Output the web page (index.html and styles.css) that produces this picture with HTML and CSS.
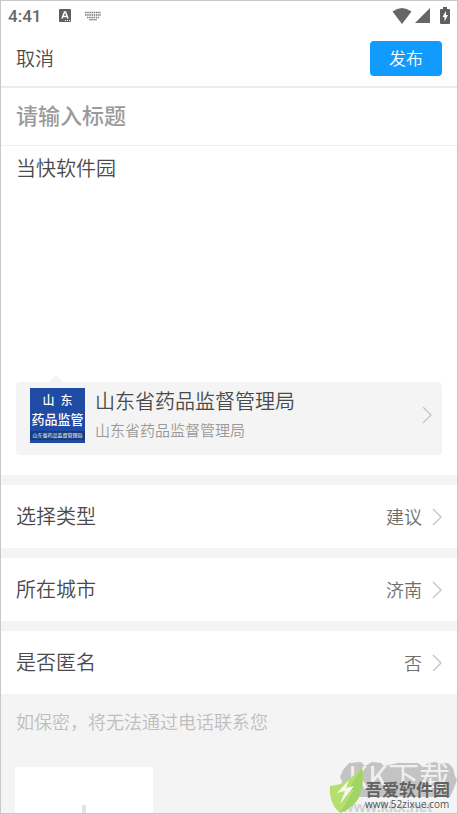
FILE: index.html
```html
<!DOCTYPE html>
<html lang="zh-CN">
<head>
  <meta charset="UTF-8" />
  <meta name="viewport" content="width=device-width, initial-scale=1.0" />
  <title>发布</title>
  <link rel="stylesheet" href="styles.css">
</head>
<body>
  <div class="screen">
    <div class="status-bar">
      <span class="time">4:41</span>
      <svg class="icon-a" width="12" height="13" viewBox="0 0 12 13">
        <rect width="12" height="13" rx="1" fill="#5f5f5f"/>
        <path d="M3 9.500L5.500 3h1L9 9.500M4 7.500h4" fill="none" stroke="#fff" stroke-width="1.500"/>
        <path d="M6 11.500h1m1 0h1m1 0h1" stroke="#fff"/>
      </svg>
      <svg class="icon-keyboard" width="16" height="10" viewBox="0 0 16 10">
        <path d="M0 1.500h16M0 4h16M2 6.500h12" stroke="#777" stroke-width="1.500" stroke-dasharray="1.500 .7"/>
        <path d="M4 8.800h8" stroke="#777"/>
      </svg>
      <span class="space"></span>
      <svg width="20" height="16" viewBox="0 0 20 16">
        <path d="M0.500 3.500Q10-3.500 19.500 3.500L10 16z" fill="#666"/>
      </svg>
      <svg class="icon-signal" width="15" height="15" viewBox="0 0 15 15">
        <path d="M15 0v15H0z" fill="#666"/>
      </svg>
      <svg class="icon-battery" width="10" height="17" viewBox="0 0 10 17">
        <path d="M3 0h4v2h2q1 0 1 1v13q0 1-1 1H1q-1 0-1-1V3q0-1 1-1h2z" fill="#5f5f5f"/>
        <path d="M6 4L2.500 10H4.500V14.500L8 8H6z" fill="#fff"/>
      </svg>
    </div>

    <div class="header">
      <button type="button" class="cancel-btn">取消</button>
      <button type="submit" form="post-form" class="publish-btn">发布</button>
    </div>

    <form id="post-form">
      <div class="editor">
        <input type="text" class="title-input" placeholder="请输入标题" aria-label="标题">
        <textarea class="content-input" aria-label="内容">当快软件园</textarea>

        <a href="#" class="org-card">
          <span class="org-logo">
            <span class="logo-top">山 东</span>
            <span class="logo-name">药品监管</span>
            <span class="logo-foot">山东省药品监督管理局</span>
          </span>
          <span class="org-text">
            <span class="org-name">山东省药品监督管理局</span>
            <span class="org-desc">山东省药品监督管理局</span>
          </span>
          <svg class="arrow" width="10" height="18" viewBox="0 0 10 18"><path d="M1 1l8 8-8 8"/></svg>
        </a>
      </div>

      <div class="row">
        <label for="type">选择类型</label>
        <select id="type">
          <option>建议</option>
        </select>
        <svg class="arrow" width="10" height="18" viewBox="0 0 10 18"><path d="M1 1l8 8-8 8"/></svg>
      </div>
      <div class="row">
        <label for="city">所在城市</label>
        <select id="city">
          <option>济南</option>
        </select>
        <svg class="arrow" width="10" height="18" viewBox="0 0 10 18"><path d="M1 1l8 8-8 8"/></svg>
      </div>
      <div class="row">
        <label for="anonymous">是否匿名</label>
        <select id="anonymous">
          <option>否</option>
          <option>是</option>
        </select>
        <svg class="arrow" width="10" height="18" viewBox="0 0 10 18"><path d="M1 1l8 8-8 8"/></svg>
      </div>

      <p class="note">如保密，将无法通过电话联系您</p>
      <button type="button" class="upload-btn" aria-label="添加图片">
        <svg width="62" height="62" viewBox="0 0 62 62"><path d="M31 0v62M0 31h62" stroke="#e3e3e3" stroke-width="4"/></svg>
      </button>
    </form>

    <div class="watermark">
      <svg width="130" height="54" viewBox="0 0 130 54">
        <path d="M15 10L21 3l12-1 4 4 7-4 9 1 3 3 14-3h20l5 4 5-4 8-1 3 2 9-1 5 5 2 8 2 4-3 8-4 9H20l-7-7 1-9-2-4z" fill="#c3c3c3"/>
        <text class="mark-back" x="20" y="29">KK下载</text>
        <text class="mark-url" x="14" y="52">www.kkx.net</text>
        <path d="M2 26C16 25 24 18 34 7C37 31 32 45 12 53C5 47 1 38 2 26z" fill="#b5df70"/>
        <path d="M34 7C37 31 32 45 12 53L26 30H20z" fill="#99cd62" opacity=".7"/>
        <path d="M21 20L9 33l8-2-5 13 14-18-8 2z" fill="#f4f9eb"/>
        <text class="mark-name" x="37" y="36">吾爱软件园</text>
        <text class="mark-site" x="37" y="48">www.52zixue.com</text>
      </svg>
    </div>
  </div>
</body>
</html>
```

FILE: styles.css
```css
* {
  box-sizing: border-box;
}

body {
  margin: 0;
  font-family: "Noto Sans CJK SC", sans-serif;
  font-weight: 350;
  color: #4a4a4a;
  background: #f4f4f4;
}

input, select, textarea, button {
  font-family: inherit;
  font-weight: inherit;
  color: inherit;
  border: none;
  border-radius: 0;
  background: none;
  padding: 0;
  margin: 0;
  outline: none;
}

.screen {
  position: relative;
  height: 100vh;
  overflow: hidden;
  border: 1px solid #c8c8c8;
}

.status-bar {
  display: flex;
  align-items: center;
  height: 29px;
  padding: 0 7px;
  background: #fff;
}

.time {
  font-family: Roboto, sans-serif;
  font-size: 17px;
  font-weight: 500;
  color: #666;
}

.icon-a {
  margin-left: 18px;
}

.icon-keyboard {
  margin-left: 14px;
}

.space {
  flex: 1;
}

.icon-signal {
  margin-left: 3px;
}

.icon-battery {
  margin-left: 10px;
}

.header {
  display: flex;
  align-items: center;
  justify-content: space-between;
  height: 58px;
  padding: 0 15px;
  background: #fff;
  border-bottom: 2px solid #ececec;
}

.cancel-btn {
  padding-bottom: 2px;
  font-size: 19px;
}

.publish-btn {
  width: 72px;
  height: 35px;
  padding-bottom: 2px;
  font-size: 17px;
  line-height: 33px;
  color: #fff;
  background: #129bff;
  border-radius: 4px;
}

.editor {
  background: #fff;
  padding-bottom: 20px;
}

.title-input {
  display: block;
  width: 100%;
  height: 58px;
  padding: 0 15px 6px;
  font-size: 22px;
  font-weight: 500;
  border-bottom: 1px solid #f0f0f0;
}

.title-input::placeholder {
  color: #9b9b9b;
}

.content-input {
  display: block;
  width: 100%;
  height: 236px;
  padding: 7px 15px;
  font-size: 20px;
  line-height: 30px;
  resize: none;
}

.org-card {
  position: relative;
  display: flex;
  align-items: center;
  margin: 0 15px;
  padding: 5px 10px 12px 14px;
  background: #f4f4f4;
  border-radius: 4px;
  color: #4a4a4a;
  text-decoration: none;
}

.org-card::before {
  content: "";
  position: absolute;
  left: 32px;
  top: -7px;
  border: 8px solid transparent;
  border-top: none;
  border-bottom: 7px solid #f4f4f4;
}

.org-logo {
  display: flex;
  flex-direction: column;
  width: 55px;
  height: 55px;
  padding-top: 5px;
  background: #1f4ba5;
  color: #fff;
  font-family: "Liberation Serif", "Noto Sans CJK SC", serif;
  font-weight: 500;
  text-align: center;
  white-space: nowrap;
}

.logo-top {
  font-size: 12px;
  line-height: 17px;
  word-spacing: 3px;
}

.logo-name {
  font-size: 13px;
  line-height: 20px;
}

.logo-foot {
  margin-top: 1px;
  font-size: 5px;
  font-weight: 400;
  line-height: 9px;
  background: #173b7f;
}

.org-text {
  display: flex;
  flex: 1;
  flex-direction: column;
  margin-left: 10px;
}

.org-name {
  font-size: 20px;
  line-height: 27px;
}

.org-desc {
  padding-top: 3px;
  font-size: 15px;
  line-height: 26px;
  color: #999;
}

.arrow path {
  fill: none;
  stroke: #c8c8c8;
  stroke-width: 1.5;
}

.row {
  display: flex;
  align-items: center;
  height: 73px;
  padding: 0 15px;
  background: #fff;
  border-top: 10px solid #f4f4f4;
}

.row label {
  padding-bottom: 2px;
  font-size: 20px;
}

.row select {
  flex: 1;
  height: 40px;
  margin-right: 10px;
  padding-bottom: 2px;
  appearance: none;
  font-size: 18px;
  color: #6e6e6e;
  text-align: right;
  text-align-last: right;
}

.note {
  margin: 0;
  padding: 13px 15px;
  font-size: 18px;
  line-height: 28px;
  color: #c0bdbd;
}

.upload-btn {
  display: flex;
  align-items: center;
  justify-content: center;
  width: 138px;
  height: 138px;
  margin: 19px 14px;
  background: #fff;
}

.watermark {
  position: absolute;
  right: -1px;
  bottom: -1px;
  height: 54px;
}

.mark-back {
  font-size: 31px;
  font-weight: 400;
  fill: #f0f0f0;
}

.mark-url {
  font-family: "Liberation Sans", sans-serif;
  font-size: 15px;
  font-weight: 700;
  fill: #d0d0d0;
}

.mark-name {
  font-size: 17px;
  font-weight: 700;
  fill: #626262;
}

.mark-site {
  font-family: "Open Sans", sans-serif;
  font-size: 10px;
  font-weight: 500;
  fill: #555;
}
```
